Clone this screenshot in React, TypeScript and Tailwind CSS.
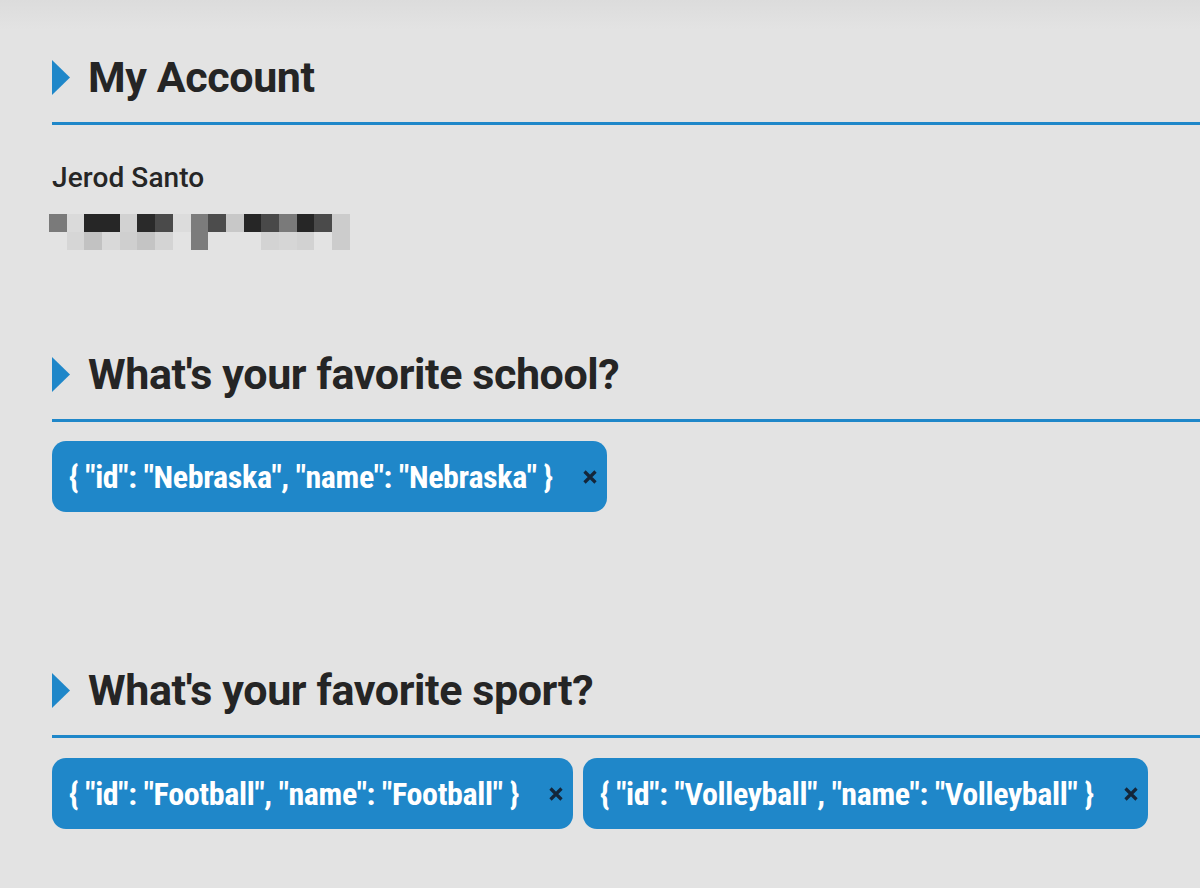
import React from 'react';

// pixelated email: [row1, row2] shades per column, '' = background
const pixels: [string, string][] = [
  ['#7a7a7a', ''],
  ['#dadada', '#d6d6d6'],
  ['#262626', '#c2c2c2'],
  ['#262626', '#d9d9d9'],
  ['#d2d2d2', '#cfcfcf'],
  ['#2a2a2a', '#c4c4c4'],
  ['#4a4a4a', '#d4d4d4'],
  ['#dcdcdc', ''],
  ['#7c7c7c', '#7c7c7c'],
  ['#4c4c4c', ''],
  ['#c8c8c8', ''],
  ['#262626', ''],
  ['#494949', '#d3d3d3'],
  ['#7a7a7a', '#d6d6d6'],
  ['#262626', '#d2d2d2'],
  ['#4a4a4a', ''],
  ['#cccccc', '#cccccc'],
];

const SectionHeading: React.FC<{ title: string }> = ({ title }) => (
  <div className="border-b-[3px] border-[#1f87c9] pb-[14px]">
    <div className="flex items-center h-[62px]">
      <svg width="18" height="35" viewBox="0 0 18 35" className="shrink-0">
        <polygon points="0,0 18,17.5 0,35" fill="#1f87c9" />
      </svg>
      <h2 className="ml-[18px] text-[43px] font-bold text-[#252525] leading-none tracking-[-0.4px]">{title}</h2>
    </div>
  </div>
);

const Chip: React.FC<{ label: string }> = ({ label }) => (
  <div className="flex items-center h-[71px] rounded-[14px] bg-[#1f87c9] pl-[17px] pr-[10px]">
    <span className="text-white font-bold text-[32px] tracking-[-0.35px] [font-stretch:77%]">{label}</span>
    <button className="ml-[30px] w-[14px] h-[14px] flex items-center justify-center">
      <svg width="14" height="14" viewBox="0 0 14 14">
        <path d="M1.5 1.5 L12.5 12.5 M12.5 1.5 L1.5 12.5" stroke="#14263a" strokeWidth="3.2" strokeLinecap="butt" />
      </svg>
    </button>
  </div>
);

const App: React.FC = () => {
  return (
    <div
      className="min-h-[888px] bg-[#e3e3e3] bg-gradient-to-b from-[#dcdcdc] to-[#e3e3e3] bg-[length:100%_30px] bg-no-repeat pl-[52px] pt-[46px] overflow-hidden"
      style={{ fontFamily: 'Roboto, "Noto Sans", sans-serif' }}
    >
      <SectionHeading title="My Account" />
      <div className="pt-[38px]">
        <p className="text-[28px] font-medium text-[#262626] leading-[30px] tracking-[0.1px]">Jerod Santo</p>
        <div className="mt-[21px] -ml-[3px] flex">
          {pixels.map(([a, b], i) => (
            <div key={i} className="flex flex-col w-[17.7px]">
              <div className="h-[18px]" style={{ background: a || 'transparent' }} />
              <div className="h-[18px]" style={{ background: b || 'transparent' }} />
            </div>
          ))}
        </div>
      </div>

      <div className="mt-[93px]">
        <SectionHeading title="What's your favorite school?" />
        <div className="mt-[19px] flex gap-[10px]">
          <Chip label='{ "id": "Nebraska", "name": "Nebraska" }' />
        </div>
      </div>

      <div className="mt-[147px]">
        <SectionHeading title="What's your favorite sport?" />
        <div className="mt-[20px] flex gap-[10px]">
          <Chip label='{ "id": "Football", "name": "Football" }' />
          <Chip label='{ "id": "Volleyball", "name": "Volleyball" }' />
        </div>
      </div>
    </div>
  );
};

export default App;
